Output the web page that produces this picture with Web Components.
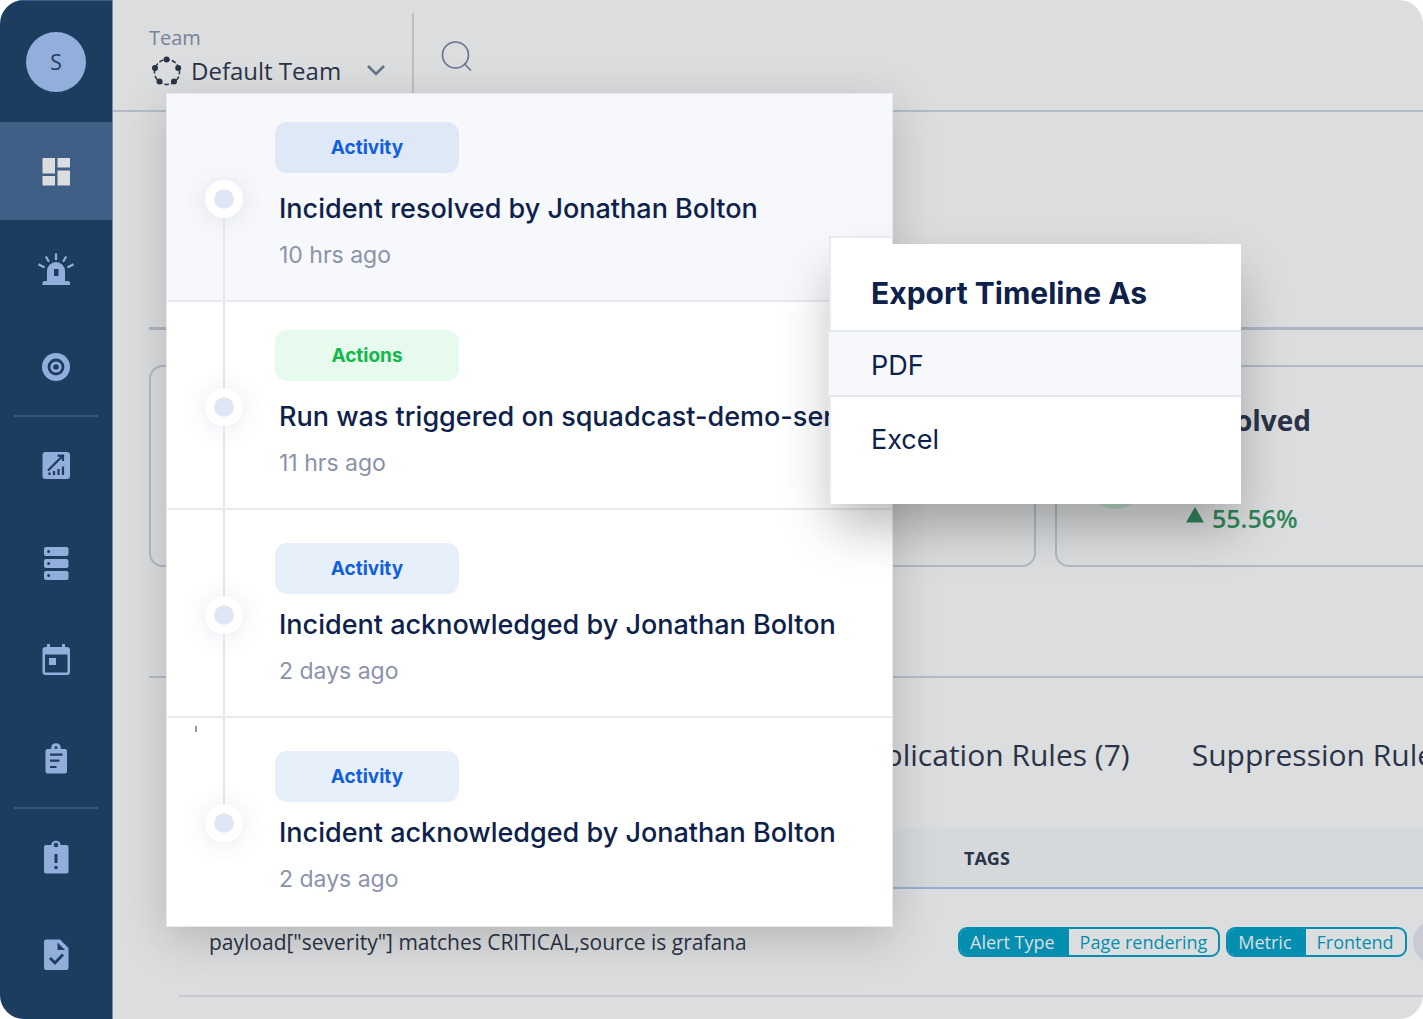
<!DOCTYPE html>
<html lang="en">
  <head>
    <meta charset="utf-8">
    <title>Default Team</title>
    <style>
      body {
        margin: 0;
        background: #fff;
        color: #2a3347;
        font-family: "Open Sans", "Noto Sans", sans-serif;
      }
    </style>
  </head>
  <body>
    <template id="app-shell">
      <style>
        :host {
          display: grid;
          grid-template-columns: 113px minmax(0, 1fr);
          min-height: 100vh;
          border-radius: 24px;
          overflow: hidden;
          background: #dcddde;
        }
        main {
          position: relative;
          overflow: hidden;
        }
      </style>
      <slot name="nav"></slot>
      <main><slot></slot></main>
    </template>

    <template id="side-nav">
      <style>
        :host {
          display: block;
          border-right: 1px solid #7d8da2;
          background: #1d3d60;
          color: #92afdb;
        }
        .user {
          display: flex;
          align-items: center;
          justify-content: center;
          height: 122px;
          border-top: 1px solid #3f5f86;
          box-sizing: border-box;
        }
        .avatar {
          width: 60px;
          height: 60px;
          border: 0;
          border-radius: 50%;
          background: #92afdb;
          color: #1d3d60;
          font: 21px "Open Sans", sans-serif;
        }
        a {
          display: flex;
          align-items: center;
          justify-content: center;
          height: 98px;
          color: inherit;
        }
        a.active {
          background: #3f5f86;
          color: #dcddde;
        }
        hr {
          height: 2px;
          margin: -1px 14px;
          border: 0;
          background: #34557c;
        }
        svg {
          width: 40px;
          height: 40px;
          fill: currentColor;
        }
        .cut { fill: #1d3d60; }
        .line { fill: none; stroke: currentColor; stroke-width: 2.2; }
        .cutline { fill: none; stroke: #1d3d60; stroke-width: 2.2; }
        .thick { stroke-width: 2.8; }
      </style>
      <div class="user"><button class="avatar">S</button></div>
      <nav>
        <a class="active" href="#dashboard" aria-label="Dashboard">
          <svg viewBox="0 0 40 40"><path d="M6.500 7H19v15.500H6.500zM21.500 7H34v9.500H21.500zM6.500 25H19v9.500H6.500zM21.500 19.500H34v15H21.500z"/></svg>
        </a>
        <a href="#incidents" aria-label="Incidents">
          <svg viewBox="0 0 40 40">
            <path d="M11 32V22a9 9 0 0 1 18 0v10h3a2 2 0 0 1 2 2v2H6.500v-2a2 2 0 0 1 2-2z"/>
            <path class="cut" d="M18 20h4.500v7H18z"/>
            <path class="line" d="M20 4.500V11M9.800 7.500l3.200 5.300M30.200 7.500L27 12.800M2.500 15.200l6 3.300M37.500 15.200l-6 3.300"/>
          </svg>
        </a>
        <a href="#services" aria-label="Services">
          <svg viewBox="0 0 40 40">
            <circle cx="20" cy="20" r="14"/>
            <circle cx="20" cy="20" r="7" class="cutline thick"/>
            <circle cx="20" cy="20" r="2.800" class="cut"/>
          </svg>
        </a>
        <hr>
        <a href="#analytics" aria-label="Analytics">
          <svg viewBox="0 0 40 40">
            <rect x="6.500" y="7" width="27.500" height="27" rx="3"/>
            <path class="cutline" d="M12 25.500L26.500 11M21.500 10.700H27V16"/>
            <path class="cutline" d="M13.500 27.500V30M18 26v4M22.500 24v6M27 21.500V30"/>
          </svg>
        </a>
        <a href="#status" aria-label="Status">
          <svg viewBox="0 0 40 40">
            <rect x="8" y="4" width="24.500" height="9" rx="2"/>
            <rect x="8" y="16" width="24.500" height="9" rx="2"/>
            <rect x="8" y="28" width="24.500" height="9" rx="2"/>
            <g class="cut"><circle cx="12.600" cy="8.500" r="1.500"/><circle cx="12.600" cy="20.500" r="1.500"/><circle cx="12.600" cy="32.500" r="1.500"/></g>
          </svg>
        </a>
        <a href="#schedules" aria-label="Schedules">
          <svg viewBox="0 0 40 40">
            <path fill-rule="evenodd" d="M11 3h3v3h12V3h3v3h2a3 3 0 0 1 3 3v22a3 3 0 0 1-3 3H9.500a3 3 0 0 1-3-3V9a3 3 0 0 1 3-3H11zM9 13.500v18h22.500v-18z"/>
            <path d="M13 17h7v7h-7z"/>
          </svg>
        </a>
        <a href="#escalations" aria-label="Escalation policies">
          <svg viewBox="0 0 40 40">
            <circle cx="20" cy="9" r="4.800"/>
            <rect x="9.500" y="10" width="21.500" height="24.500" rx="2"/>
            <circle class="cut" cx="20" cy="8.500" r="1.500"/>
            <path class="cutline" d="M14 15.700h12.500M14 21.700h9.500M14 28h6.500"/>
          </svg>
        </a>
        <hr>
        <a href="#postmortems" aria-label="Postmortems">
          <svg viewBox="0 0 40 40">
            <circle cx="20" cy="8.500" r="4.800"/>
            <rect x="8" y="8" width="24.500" height="28.500" rx="2"/>
            <circle class="cut" cx="20" cy="8" r="2.300"/>
            <path class="cut" d="M18.500 17h3v9h-3z"/>
            <circle class="cut" cx="20" cy="30.500" r="1.800"/>
          </svg>
        </a>
        <a href="#runbooks" aria-label="Runbooks">
          <svg viewBox="0 0 40 40">
            <path d="M10.500 4.500H24l8.500 8.500v19.500a2.500 2.500 0 0 1-2.500 2.500H10.500A2.500 2.500 0 0 1 8 32.500V7a2.500 2.500 0 0 1 2.500-2.500z"/>
            <path class="cut" d="M21.500 7.500V15H29z"/>
            <path class="cutline thick" d="M14 23l5 5 8-8.500"/>
          </svg>
        </a>
      </nav>
    </template>

    <template id="team-picker">
      <style>
        :host {
          display: flex;
          height: 112px;
          box-sizing: border-box;
          border-bottom: 2px solid #b4bbc8;
          padding: 13px 0 0 36px;
        }
        .team {
          display: flex;
          flex-direction: column;
          width: 265px;
          border-right: 2px solid #bcbec2;
          padding-top: 11px;
          box-sizing: border-box;
        }
        label {
          color: #76849a;
          font-size: 20px;
          line-height: 28px;
        }
        .row {
          display: flex;
          align-items: center;
          height: 38px;
        }
        select {
          flex: 1;
          appearance: none;
          border: 0;
          padding: 0;
          margin-left: 6px;
          background: none;
          color: inherit;
          font: 24px/36px "Open Sans", sans-serif;
        }
        .row svg { flex: none; }
        .chevron { margin-right: 26px; }
        button {
          align-self: flex-start;
          margin: 26px 0 0 25px;
          border: 0;
          padding: 0;
          background: none;
        }
        svg { display: block; }
      </style>
      <div class="team">
        <label for="team">Team</label>
        <div class="row">
          <svg width="36" height="32" viewBox="0 0 36 32" fill="#2a3347">
            <circle cx="18" cy="17" r="12.500" fill="none" stroke="#2a3347" stroke-width="1.500" stroke-dasharray="4.500 2.040" stroke-dashoffset="2"/>
            <circle cx="17.600" cy="4.500" r="3"/><circle cx="6" cy="13" r="3"/><circle cx="29.200" cy="13" r="3"/><circle cx="10.500" cy="26.500" r="3"/><circle cx="25" cy="26.500" r="3"/>
          </svg>
          <select id="team"><option>Default Team</option></select>
          <svg class="chevron" width="20" height="14" viewBox="0 0 20 14"><path d="M2 2l8 8 8-8" fill="none" stroke="#66738a" stroke-width="2.600"/></svg>
        </div>
      </div>
      <button aria-label="Search">
        <svg width="34" height="34" viewBox="0 0 34 34" fill="none" stroke="#66738a" stroke-width="1.600"><circle cx="16.500" cy="16" r="13"/><path d="M25 24.500l7 7"/></svg>
      </button>
    </template>

    <template id="stat-card">
      <style>
        :host {
          display: grid;
          grid-template-columns: 60px auto;
          justify-content: start;
          align-items: end;
          column-gap: 41px;
          flex: none;
          width: 434px;
          height: 202px;
          box-sizing: border-box;
          border: 2px solid #b0b9c5;
          border-radius: 14px;
          padding: 31px 28px;
        }
        .dot {
          width: 60px;
          height: 60px;
          border-radius: 50%;
          background: #b9d8c6;
          margin-bottom: 25px;
        }
        h3 {
          margin: 0 0 64px;
          font-size: 28px;
          font-weight: 700;
          line-height: 36px;
        }
      </style>
      <span class="dot"></span>
      <div>
        <h3><slot></slot></h3>
        <slot name="trend"></slot>
      </div>
    </template>

    <template id="trend-value">
      <style>
        :host {
          display: flex;
          align-items: center;
          gap: 8px;
          color: #2f8559;
          font-size: 25px;
          font-weight: 600;
          line-height: 32px;
        }
      </style>
      <svg width="18" height="22" viewBox="0 0 18 22"><path d="M9 0l9 15.500H0z" fill="currentColor"/></svg>
      <span><slot></slot></span>
    </template>

    <template id="rules-page">
      <style>
        :host { display: block; }
        .intro {
          height: 218px;
          margin: 0 0 35px 36px;
          box-sizing: border-box;
          border-bottom: 3px solid #acb6c4;
        }
        .cards {
          display: flex;
          gap: 19px;
          padding: 0 0 109px 36px;
        }
        .tabs {
          display: flex;
          align-items: center;
          gap: 62px;
          height: 152px;
          margin-left: 36px;
          box-sizing: border-box;
          padding: 3px 0 0 660px;
          border-top: 2px solid #b4bbc8;
        }
        .tabs button {
          flex: none;
          border: 0;
          padding: 0;
          background: none;
          color: inherit;
          font: 30px/44px "Open Sans", sans-serif;
        }
        table {
          width: calc(100% - 66px);
          margin-left: 66px;
          table-layout: fixed;
          border-collapse: collapse;
          text-align: left;
        }
        .condition { width: 767px; }
        th {
          height: 59px;
          padding: 0 6px;
          background: #d5d9dc;
          border-bottom: 2px solid #98aed0;
          font-size: 18px;
          font-weight: 700;
        }
        td {
          height: 106px;
          padding: 0;
          border-bottom: 2px solid #c6c9cd;
          font-size: 21px;
        }
        td:first-child { padding-left: 30px; }
        .tags {
          display: flex;
          align-items: center;
          gap: 6px;
        }
        .more {
          flex: none;
          width: 44px;
          height: 44px;
          border: 0;
          border-radius: 50%;
          background: #c8cad4;
        }
      </style>
      <div class="intro"></div>
      <div class="cards"><slot name="card"></slot></div>
      <div class="tabs">
        <button>Deduplication Rules (7)</button>
        <button>Suppression Rules</button>
      </div>
      <table>
        <thead><tr><th class="condition"></th><th>TAGS</th></tr></thead>
        <tbody>
          <tr>
            <td>payload["severity"] matches CRITICAL,source is grafana</td>
            <td>
              <div class="tags">
                <tag-pill name="Alert Type">Page rendering</tag-pill>
                <tag-pill name="Metric">Frontend</tag-pill>
                <button class="more" aria-label="More tags"></button>
              </div>
            </td>
          </tr>
        </tbody>
      </table>
    </template>

    <template id="tag-pill">
      <style>
        :host {
          display: flex;
          flex: none;
          border: 2px solid #048fb0;
          border-radius: 9px;
          overflow: hidden;
          color: #048fb0;
          font-size: 18px;
          line-height: 26px;
          white-space: nowrap;
        }
        span { padding: 0 11px; }
        .name {
          background: #048fb0;
          color: #dcddde;
          padding: 0 14px 0 10px;
        }
      </style>
      <span class="name"></span><span><slot></slot></span>
    </template>

    <template id="timeline-panel">
      <style>
        :host {
          display: block;
          position: absolute;
          top: 93px;
          left: 53px;
          width: 725px;
          border: 1px solid #e6e8ee;
          background: #fff;
          box-shadow: 0 12px 44px rgba(0, 0, 0, .18);
          color: #0d214b;
          font-family: Inter, "Open Sans", sans-serif;
        }
      </style>
      <slot></slot>
    </template>

    <template id="timeline-item">
      <style>
        :host {
          display: flex;
          gap: 32px;
          height: 208px;
          box-sizing: border-box;
          border-bottom: 2px solid #e9eaef;
          padding-left: 38px;
        }
        :host([active]) {
          background: #f7f8fc;
          --badge: #dee8f7;
        }
        :host([kind="Actions"]) {
          --badge: #e7faee;
          --badge-text: #12b84c;
        }
        /* caret mark left of the rail */
        :host(:last-of-type) {
          border-bottom: 0;
          background: linear-gradient(#999, #999) 28px 8px / 2px 6px no-repeat;
        }
        .rail {
          display: flex;
          flex-direction: column;
          align-items: center;
          width: 38px;
        }
        .rail i {
          width: 2px;
          background: #e3e5ea;
        }
        .before { height: 86px; }
        .after { flex: 1; }
        :host(:first-of-type) .before,
        :host(:last-of-type) .after { background: none; }
        .dot {
          width: 20px;
          height: 20px;
          border: 9px solid #fff;
          border-radius: 50%;
          background: #dfe6f4;
          background-clip: padding-box;
          box-shadow: 0 2px 24px rgba(40, 70, 110, .12);
        }
        .head {
          height: 99px;
          box-sizing: border-box;
          padding-top: 28px;
        }
        :host([past]) .head { padding-top: 33px; }
        .badge {
          display: block;
          width: 184px;
          border-radius: 12px;
          background: var(--badge, #e7effb);
          color: var(--badge-text, #115fdc);
          font-size: 19px;
          font-weight: 700;
          line-height: 51px;
          text-align: center;
        }
        h4 {
          margin: 0 0 16px 4px;
          font-size: 27px;
          font-weight: 500;
          line-height: 32px;
          white-space: nowrap;
        }
        time {
          display: block;
          margin-left: 4px;
          color: #8a93a9;
          font-size: 23px;
          line-height: 28px;
        }
      </style>
      <div class="rail"><i class="before"></i><span class="dot"></span><i class="after"></i></div>
      <div>
        <div class="head"><span class="badge"></span></div>
        <h4><slot></slot></h4>
        <time></time>
      </div>
    </template>

    <template id="export-menu">
      <style>
        :host {
          display: block;
          position: absolute;
          top: 244px;
          left: 716px;
          width: 412px;
          box-sizing: border-box;
          border-left: 2px solid #e9eaef;
          padding-bottom: 24px;
          background: #fff;
          box-shadow: 0 26px 48px -4px rgba(0, 0, 0, .28);
          color: #0d214b;
          font-family: Inter, "Open Sans", sans-serif;
        }
        /* tab that rises over the timeline's edge */
        :host::before {
          content: "";
          position: absolute;
          left: -2px;
          bottom: 100%;
          width: 61px;
          height: 6px;
          border: 2px solid #e9eaef;
          border-width: 2px 0 0 2px;
          background: #fff;
        }
        h2 {
          margin: 0;
          padding: 12px 0 0 40px;
          font-size: 30px;
          font-weight: 700;
          line-height: 74px;
        }
        button {
          display: block;
          width: 100%;
          border: 0;
          padding: 2px 0 0 40px;
          background: none;
          color: inherit;
          font: 27px/81px Inter, sans-serif;
          text-align: left;
        }
        button.active {
          width: calc(100% + 4px);
          margin-left: -4px;
          border: 2px solid #e6e8ef;
          border-right: 0;
          padding: 4px 0 0 42px;
          background: #f7f8fc;
          line-height: 59px;
        }
      </style>
      <h2>Export Timeline As</h2>
      <button class="active">PDF</button>
      <button>Excel</button>
    </template>

    <app-shell>
      <side-nav slot="nav"></side-nav>
      <team-picker></team-picker>
      <rules-page>
        <stat-card slot="card"></stat-card>
        <stat-card slot="card"></stat-card>
        <stat-card slot="card">Resolved<trend-value slot="trend">55.56%</trend-value></stat-card>
      </rules-page>
      <timeline-panel>
        <timeline-item active kind="Activity" when="10 hrs ago">Incident resolved by Jonathan Bolton</timeline-item>
        <timeline-item kind="Actions" when="11 hrs ago">Run was triggered on squadcast-demo-ser</timeline-item>
        <timeline-item past kind="Activity" when="2 days ago">Incident acknowledged by Jonathan Bolton</timeline-item>
        <timeline-item past kind="Activity" when="2 days ago">Incident acknowledged by Jonathan Bolton</timeline-item>
      </timeline-panel>
      <export-menu></export-menu>
    </app-shell>

    <script type="text/javascript">
      class TemplateElement extends HTMLElement {
        constructor() {
          super();

          const shadowRoot = this.attachShadow({mode: 'open'});
          const t = document.getElementById(this.localName);
          shadowRoot.appendChild(t.content.cloneNode(true));
        }
      }

      class TagPill extends TemplateElement {
        connectedCallback() {
          this.shadowRoot.querySelector('.name').textContent = this.getAttribute('name');
        }
      }

      class TimelineItem extends TemplateElement {
        connectedCallback() {
          this.shadowRoot.querySelector('.badge').textContent = this.getAttribute('kind');
          this.shadowRoot.querySelector('time').textContent = this.getAttribute('when');
        }
      }

      customElements.define('tag-pill', TagPill);
      customElements.define('timeline-item', TimelineItem);
      for (const name of ['app-shell', 'side-nav', 'team-picker', 'stat-card', 'trend-value',
                          'rules-page', 'timeline-panel', 'export-menu']) {
        customElements.define(name, class extends TemplateElement {});
      }
    </script>
  </body>
</html>
